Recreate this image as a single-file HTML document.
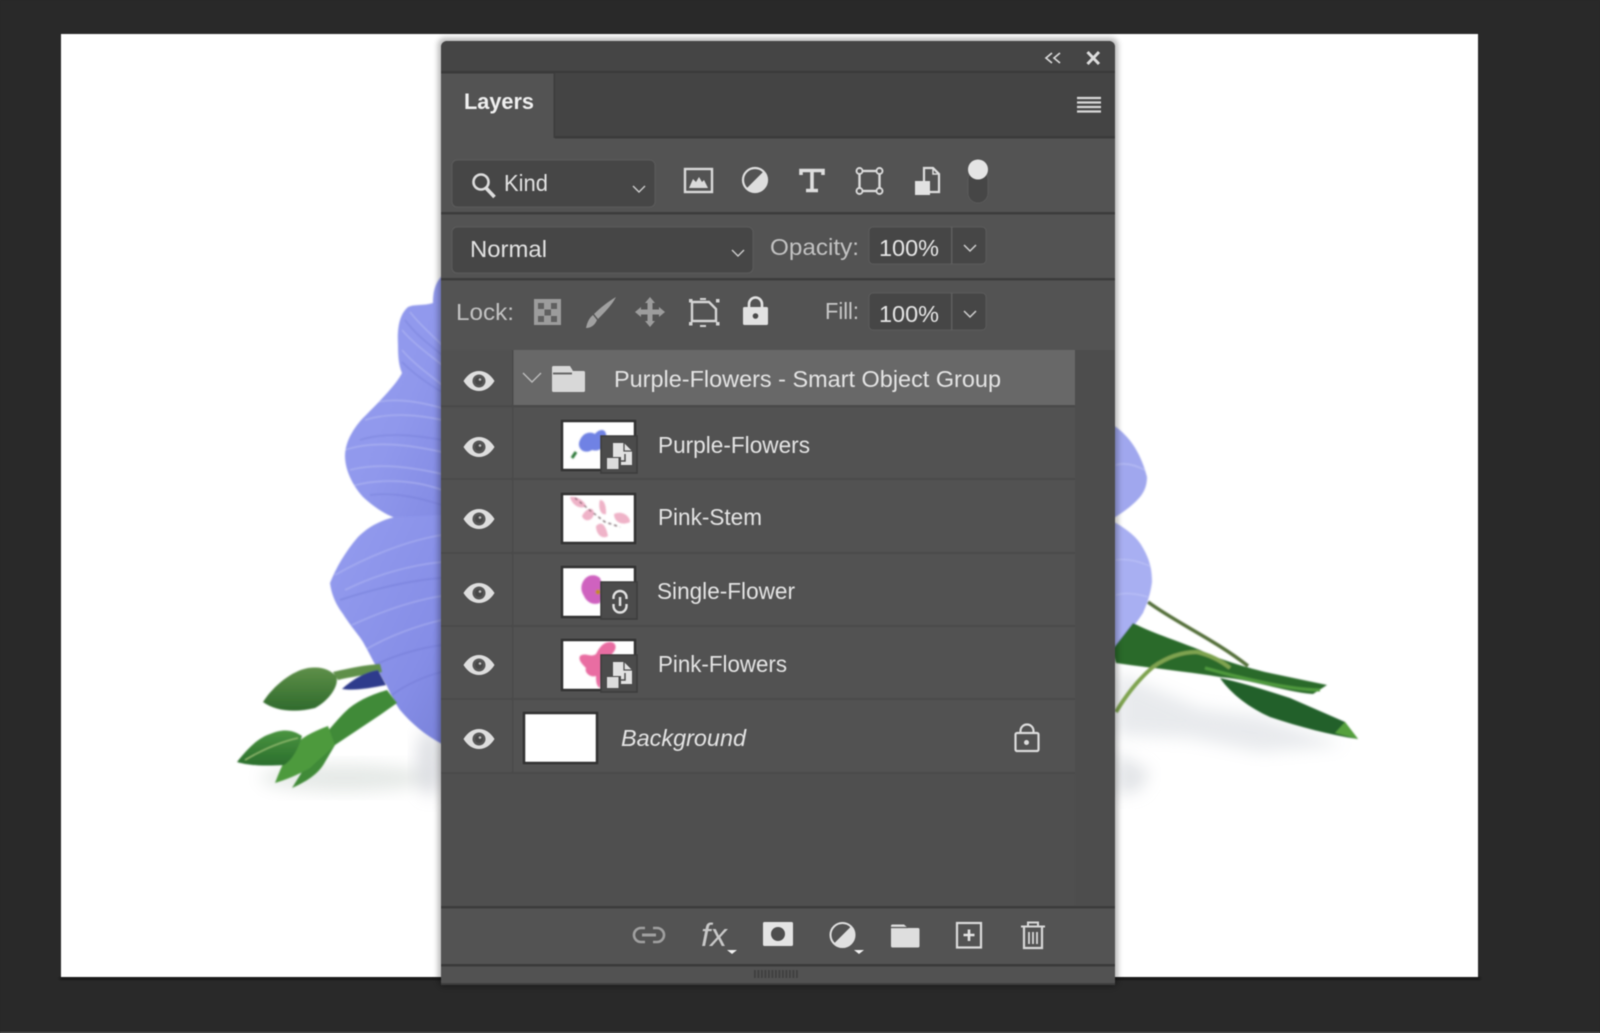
<!DOCTYPE html>
<html><head><meta charset="utf-8"><title>Layers</title>
<style>
html,body{margin:0;padding:0;background:#292929;width:1600px;height:1033px;overflow:hidden}
svg{display:block;position:absolute;left:0;top:0;filter:blur(.45px)}
text{font-family:"Liberation Sans",sans-serif;fill:#d6d6d6}
</style></head><body>
<svg width="1600" height="1033" viewBox="0 0 1600 1033" xmlns="http://www.w3.org/2000/svg">
<defs>
<linearGradient id="pa" x1="0" y1="0" x2="1" y2="1"><stop offset="0" stop-color="#939bee"/><stop offset=".55" stop-color="#9098ec"/><stop offset="1" stop-color="#8189e2"/></linearGradient>
<linearGradient id="pb" x1="0" y1="0" x2="1" y2="1"><stop offset="0" stop-color="#959def"/><stop offset=".7" stop-color="#858de6"/><stop offset="1" stop-color="#7780d8"/></linearGradient>
<linearGradient id="g1" x1="0" y1="0" x2="0" y2="1"><stop offset="0" stop-color="#5e8f48"/><stop offset="1" stop-color="#2f6a2c"/></linearGradient>
<linearGradient id="g2" x1="0" y1="0" x2="0" y2="1"><stop offset="0" stop-color="#4a9440"/><stop offset="1" stop-color="#2a6e2c"/></linearGradient>
<filter id="b8" x="-30%" y="-30%" width="160%" height="160%"><feGaussianBlur stdDeviation="8"/></filter>
<filter id="b3" x="-30%" y="-30%" width="160%" height="160%"><feGaussianBlur stdDeviation="3"/></filter>
<filter id="b1"><feGaussianBlur stdDeviation=".7"/></filter>
<filter id="s1"><feGaussianBlur stdDeviation="1"/></filter>
<clipPath id="pc1"><path d="M442 276C436 282 433 290 433 303C424 306 414 304 408 307C400 314 397 326 398 345C398 358 399 366 402 373C397 383 385 396 363 418C351 431 345 444 345 456C345 468 351 484 363 497C375 508 385 514 395 518L445 530V276Z"/></clipPath>
<clipPath id="pc2"><path d="M395 517C378 521 367 528 358 537C345 552 336 568 330 583C332 598 338 607 343 614C352 628 358 634 363 642C372 658 380 675 387 686C392 698 396 704 400 710C412 724 425 735 442 744V515Z"/></clipPath>
<g id="eye"><path d="M-15.500 0C-11-7-6-10 0-10C6-10 11-7 15.500 0C11 7 6 10 0 10C-6 10-11 7-15.500 0Z" fill="#dedede"/><circle r="6.500" fill="#565656"/><circle cx="0" cy="0" r="4" fill="#484848"/><circle cx="1" cy="-1.500" r="1.300" fill="#bdbdbd"/></g>
<g id="sm"><rect x="0" y="0" width="36" height="37" fill="#4b4b4b" stroke="#3d3d3d" stroke-width="1.500"/><path d="M12 7H23L31 15V29H20V21H12Z" fill="#e2e2e2"/><path d="M23 7V15H31" fill="none" stroke="#4b4b4b" stroke-width="1.300"/><path d="M24 18V25H20" fill="none" stroke="#4b4b4b" stroke-width="1.500"/><rect x="6" y="22" width="11.500" height="11" fill="#dcdcdc"/></g>
</defs>

<rect width="1600" height="1033" fill="#292929"/>
<rect x="0" y="1032" width="1600" height="1" fill="#606060"/>
<rect x="60" y="977" width="1420" height="3" fill="#161616" filter="url(#s1)"/>
<rect x="61" y="34" width="1417" height="943" fill="#fff"/>

<!-- left shadows -->
<ellipse cx="345" cy="778" rx="85" ry="14" fill="#b8c2bc" opacity=".35" filter="url(#b8)"/>
<ellipse cx="430" cy="762" rx="14" ry="34" fill="#c6c9d0" opacity=".55" filter="url(#b8)"/>
<!-- left petals -->
<g filter="url(#b1)">
<g clip-path="url(#pc1)"><rect x="340" y="270" width="110" height="255" fill="url(#pa)"/>
<g stroke="#c3c8f6" stroke-width="1.200" fill="none" opacity=".55">
<path d="M345 450C375 440 410 445 442 452"/><path d="M350 470C380 462 415 468 442 474"/><path d="M352 486C380 478 415 480 442 490"/><path d="M365 420C390 412 420 415 442 420"/><path d="M378 402C398 398 420 402 442 408"/><path d="M402 330C415 345 430 355 442 365"/><path d="M402 350C415 365 430 375 442 385"/><path d="M410 312C420 325 432 335 442 345"/></g>
<g stroke="#6c74d0" stroke-width="1.400" fill="none" opacity=".4">
<path d="M360 440C385 432 415 435 442 440"/><path d="M405 320C416 335 430 345 442 355"/><path d="M402 362C415 375 430 385 442 392"/><path d="M370 495C395 492 420 498 442 505"/></g></g>
<g clip-path="url(#pc2)"><rect x="325" y="510" width="125" height="240" fill="url(#pb)"/>
<g stroke="#bcc2f5" stroke-width="1.300" fill="none" opacity=".55">
<path d="M345 590C375 575 410 565 442 562"/><path d="M335 575C370 555 410 540 442 535"/><path d="M352 625C385 610 415 600 442 596"/><path d="M365 650C390 635 420 625 442 620"/></g>
<g stroke="#6c74d0" stroke-width="1.500" fill="none" opacity=".45">
<path d="M375 665C395 655 420 648 442 645"/><path d="M392 695C405 685 425 676 442 672"/><path d="M340 600C370 590 410 580 442 578"/></g></g>
</g>
<!-- left buds -->
<g filter="url(#b1)">
<path d="M333 672C350 668 365 665 380 664L382 672C365 675 350 677 338 680Z" fill="#5f8f4a"/>
<path d="M263 702C274 685 292 671 308 668C322 666 330 670 336 676C340 684 330 700 315 708C295 713 275 711 263 702Z" fill="url(#g1)"/>
<path d="M342 689C352 680 365 672 378 670L386 685C370 688 355 691 342 689Z" fill="#2f3a8c"/>
<path d="M397 703L387 690C370 695 355 702 345 712C335 722 325 735 318 742C310 760 300 775 292 788C305 782 318 775 325 762L335 745C350 735 365 725 380 715Z" fill="#3f8a38"/>
<path d="M275 783C280 770 285 758 292 748C300 738 312 732 328 726L335 745C325 755 318 760 310 768C298 775 285 780 275 783Z" fill="#4d9a3e"/>
<path d="M237 762C248 748 258 738 270 734C282 729 292 729 302 736C298 750 292 760 284 765C268 766 250 766 237 762Z" fill="url(#g2)"/>
<path d="M245 760C262 750 280 742 298 738" stroke="#9fc97a" stroke-width="1.100" fill="none"/>
</g>

<!-- right shadows -->
<path d="M1116 672L1200 708 1260 716 1345 745 1260 752 1190 738 1116 735Z" fill="#cdd2d8" opacity=".45" filter="url(#b8)"/>
<path d="M1116 752L1150 772 1140 790 1116 796Z" fill="#c6cad0" opacity=".5" filter="url(#b8)"/>
<!-- right petals -->
<g filter="url(#b1)">
<path d="M1112 425L1116 427C1128 436 1140 450 1147 477C1147 486 1144 492 1140 497C1133 505 1124 512 1112 519Z" fill="#a0a7ee"/>
<path d="M1112 522L1116 523C1128 530 1138 538 1143 548C1150 560 1152 570 1152 582C1150 597 1146 606 1143 613C1135 625 1125 638 1112 652Z" fill="#a8aff2"/>
<g stroke="#c7ccf8" stroke-width="1.200" fill="none" opacity=".6"><path d="M1116 465C1125 462 1135 465 1145 470"/><path d="M1116 560C1128 558 1140 562 1150 566"/><path d="M1116 595C1126 592 1138 594 1148 597"/></g>
<path d="M1148 602C1175 622 1215 640 1248 666" stroke="#55703a" stroke-width="3.500" fill="none"/>
<path d="M1112 650L1133 623C1150 632 1175 640 1200 650C1225 662 1250 668 1265 672L1327 685 1313 694C1285 692 1255 680 1220 677C1190 672 1150 668 1116 663Z" fill="#2a6a2c"/>
<path d="M1220 678C1240 682 1265 690 1290 698L1345 722 1358 739C1330 735 1300 727 1270 717C1250 708 1232 695 1220 678Z" fill="#23602a"/>
<path d="M1345 722L1358 739 1335 733Z" fill="#55a03e"/>
<path d="M1205 668C1240 678 1290 690 1320 690" stroke="#4f9a3e" stroke-width="3" fill="none"/>
<path d="M1116 712C1128 692 1140 678 1153 667C1170 655 1185 652 1197 652C1210 655 1220 660 1230 668" stroke="#7ea34f" stroke-width="4" fill="none"/>
</g>

<!-- panel -->
<rect x="438" y="38" width="680" height="949" rx="7" fill="#000" opacity=".28" filter="url(#b3)"/>
<path d="M441 47a6 6 0 0 1 6-6H1109a6 6 0 0 1 6 6V985H441Z" fill="#535353"/>
<!-- title -->
<path d="M441 47a6 6 0 0 1 6-6H1109a6 6 0 0 1 6 6V71H441Z" fill="#454545"/>
<rect x="441" y="71" width="674" height="2.500" fill="#3a3a3a"/>
<rect x="555" y="73" width="560" height="64" fill="#444"/>
<rect x="555" y="136" width="560" height="2.500" fill="#3b3b3b"/>
<rect x="553.500" y="73" width="1.500" height="65" fill="#3d3d3d"/>
<path d="M1052 53L1046 58 1052 63M1060 53L1054 58 1060 63" fill="none" stroke="#d8d8d8" stroke-width="1.700"/>
<path d="M1087.500 52L1099 64M1099 52L1087.500 64" stroke="#dcdcdc" stroke-width="3"/>
<path d="M1077 98H1101M1077 102.500H1101M1077 107H1101M1077 111.500H1101" stroke="#d8d8d8" stroke-width="2.200"/>
<text x="464" y="109" font-size="22" font-weight="700" textLength="70" lengthAdjust="spacingAndGlyphs" style="fill:#f0f0f0">Layers</text>

<!-- filter row -->
<rect x="441" y="212" width="674" height="2.500" fill="#3c3c3c"/>
<rect x="452" y="160" width="203" height="47" rx="5" fill="#464646" stroke="#5c5c5c" stroke-width="1"/>
<circle cx="481" cy="182" r="7.500" fill="none" stroke="#dcdcdc" stroke-width="2.600"/>
<path d="M486 188L494.500 197" stroke="#dcdcdc" stroke-width="3.600"/>
<text x="504" y="191" font-size="23" textLength="44" lengthAdjust="spacingAndGlyphs" style="fill:#e2e2e2">Kind</text>
<path d="M633 186L639 192 645 186" fill="none" stroke="#cdcdcd" stroke-width="1.400"/>
<!-- image icon -->
<rect x="685" y="169" width="27" height="23" fill="none" stroke="#dadada" stroke-width="2.400"/>
<path d="M689 188L693 179 696 182 699 177 702 182 704 180 708 188Z" fill="#dadada"/>
<!-- adj -->
<circle cx="755" cy="180" r="12" fill="#535353" stroke="#dedede" stroke-width="2.200"/>
<path d="M763.500 171.500A12 12 0 0 1 746.500 188.500Z" fill="#dedede"/>
<!-- T -->
<path d="M801 175V170.500H823V175M812 170.500V190.500M806 190.500H818" fill="none" stroke="#dedede" stroke-width="3.600"/>
<!-- transform -->
<rect x="859.500" y="171" width="20" height="20" fill="none" stroke="#dadada" stroke-width="2.400"/>
<g fill="#535353" stroke="#dadada" stroke-width="1.900"><circle cx="859.500" cy="171" r="3"/><circle cx="879.500" cy="171" r="3"/><circle cx="859.500" cy="191" r="3"/><circle cx="879.500" cy="191" r="3"/></g>
<!-- smart -->
<path d="M924 181V168H933L939 174V192H929" fill="none" stroke="#dedede" stroke-width="2.200"/>
<path d="M933 168V174H939" fill="none" stroke="#dedede" stroke-width="1.500"/>
<rect x="915" y="181" width="15" height="14" fill="#e2e2e2"/>
<!-- toggle -->
<rect x="968" y="170" width="20" height="33" rx="10" fill="#464646" stroke="#5a5a5a"/>
<circle cx="978" cy="169.500" r="10" fill="#e4e4e4"/>

<!-- blend row -->
<rect x="441" y="278" width="674" height="2.500" fill="#3c3c3c"/>
<rect x="452" y="227" width="301" height="46" rx="5" fill="#464646" stroke="#5c5c5c"/>
<text x="470" y="257" font-size="23" textLength="77" lengthAdjust="spacingAndGlyphs" style="fill:#e2e2e2">Normal</text>
<path d="M732 250L738 256 744 250" fill="none" stroke="#cdcdcd" stroke-width="1.400"/>
<text x="770" y="255" font-size="23" textLength="89" lengthAdjust="spacingAndGlyphs" style="fill:#c2c2c2">Opacity:</text>
<rect x="869" y="227" width="117" height="37" rx="4" fill="#464646" stroke="#5c5c5c"/>
<rect x="951" y="227" width="1.500" height="37" fill="#5e5e5e"/>
<text x="879" y="256" font-size="23" textLength="60" lengthAdjust="spacingAndGlyphs" style="fill:#e6e6e6">100%</text>
<path d="M964 245L970 251 976 245" fill="none" stroke="#cfcfcf" stroke-width="1.500"/>

<!-- lock row -->
<text x="456" y="320" font-size="23" textLength="58" lengthAdjust="spacingAndGlyphs" style="fill:#c2c2c2">Lock:</text>
<rect x="534" y="299" width="27" height="26" fill="#9c9c9c"/>
<g fill="#606060"><rect x="538" y="303" width="6" height="6"/><rect x="551" y="303" width="6" height="6"/><rect x="544.500" y="309.500" width="6.500" height="6"/><rect x="538" y="316" width="6" height="6"/><rect x="551" y="316" width="6" height="6"/></g>
<path d="M616 297C612 305 604 313 598 319L594 314C600 308 609 301 616 297Z" fill="#a0a0a0"/>
<path d="M593 315L597 320C595 325 591 328 586 328C587 323 589 318 593 315Z" fill="#a0a0a0"/>
<path d="M650 297L655 303H652.500V309.500H659V307L665 312 659 317V314.500H652.500V321H655L650 327 645 321H647.500V314.500H641V317L635 312 641 307V309.500H647.500V303H645Z" fill="#9c9c9c"/>
<path d="M692 302H709L716 309V321H692Z" fill="none" stroke="#d4d4d4" stroke-width="2.400"/>
<g fill="#d4d4d4"><rect x="689" y="299" width="3.500" height="3.500"/><rect x="716" y="299" width="3.500" height="3.500"/><rect x="689" y="322" width="3.500" height="3.500"/><rect x="716" y="322" width="3.500" height="3.500"/><rect x="700" y="298" width="6" height="2"/><rect x="700" y="325" width="6" height="2"/></g>
<path d="M749 308V304a6.500 6.500 0 0 1 13 0V308" fill="none" stroke="#e2e2e2" stroke-width="2.600"/>
<rect x="743" y="307" width="25" height="18" rx="1.500" fill="#e2e2e2"/><circle cx="755.500" cy="316" r="2.800" fill="#4a4a4a"/>
<text x="825" y="319" font-size="23" textLength="34" lengthAdjust="spacingAndGlyphs" style="fill:#c8c8c8">Fill:</text>
<rect x="869" y="293" width="117" height="37" rx="4" fill="#464646" stroke="#5c5c5c"/>
<rect x="951" y="293" width="1.500" height="37" fill="#5e5e5e"/>
<text x="879" y="322" font-size="23" textLength="60" lengthAdjust="spacingAndGlyphs" style="fill:#e6e6e6">100%</text>
<path d="M964 311L970 317 976 311" fill="none" stroke="#cfcfcf" stroke-width="1.500"/>

<!-- layers area -->
<rect x="441" y="350" width="674" height="556" fill="#4f4f4f"/>
<rect x="1075" y="350" width="40" height="556" fill="#4d4d4d"/>
<rect x="441" y="350" width="72" height="423" fill="#515151"/>
<rect x="513" y="350" width="562" height="55" fill="#686868"/>
<rect x="513" y="405" width="562" height="368" fill="#525252"/>
<g fill="#4a4a4a"><rect x="441" y="405" width="634" height="2.500"/><rect x="441" y="478" width="634" height="2"/><rect x="441" y="552" width="634" height="2"/><rect x="441" y="625" width="634" height="2"/><rect x="441" y="698" width="634" height="2"/><rect x="441" y="772" width="634" height="2"/><rect x="512" y="350" width="1.500" height="423"/></g>
<use href="#eye" x="479" y="381"/><use href="#eye" x="479" y="447"/><use href="#eye" x="479" y="519"/><use href="#eye" x="479" y="593"/><use href="#eye" x="479" y="665"/><use href="#eye" x="479" y="739"/>

<!-- group -->
<path d="M523 373L532 382 541 373" fill="none" stroke="#bdbdbd" stroke-width="1.400"/>
<path d="M552 367.500a1.500 1.500 0 0 1 1.500-1.500H570L573 371H583.500a1.500 1.500 0 0 1 1.500 1.500V390.500a1.500 1.500 0 0 1-1.500 1.500H553.500a1.500 1.500 0 0 1-1.500-1.500Z" fill="#d8d8d8"/>
<path d="M553 373.500H572" stroke="#686868" stroke-width="2"/>
<text x="614" y="387" font-size="23" textLength="387" lengthAdjust="spacingAndGlyphs" style="fill:#e4e4e4">Purple-Flowers - Smart Object Group</text>

<!-- thumbs -->
<g stroke="#323232" stroke-width="2.500" fill="#fff">
<rect x="562" y="421" width="73" height="49"/><rect x="562" y="494" width="73" height="49"/><rect x="562" y="567" width="73" height="50"/><rect x="562" y="640" width="73" height="50"/><rect x="524" y="713" width="73" height="50"/>
</g>
<!-- purple thumb -->
<g filter="url(#b1)"><path d="M580 440C584 431 592 432 595 434C600 428 608 428 606 440C606 448 598 452 592 450C584 455 576 448 580 440Z" fill="#6f82e4"/><path d="M576 452L572 458" stroke="#2f7a3a" stroke-width="3"/></g>
<use href="#sm" x="601" y="436"/>
<!-- pink stem -->
<g filter="url(#b1)" fill="#efb3c8">
<path d="M570 497C576 496 584 500 586 506 580 510 572 505 570 497Z"/><path d="M582 516C586 508 594 506 594 514 592 522 584 522 582 516Z"/><path d="M600 500C606 500 606 510 606 514 600 516 598 506 600 500Z"/><path d="M614 514C622 510 630 516 630 522 622 526 614 522 614 514Z"/><path d="M596 526C602 520 606 526 608 536 602 540 596 534 596 526Z"/><path d="M575 498L592 512 605 522 620 527" fill="none" stroke="#4a3038" stroke-width="1" stroke-dasharray="3 3"/>
</g>
<!-- single flower -->
<g filter="url(#b1)"><path d="M584 580C588 574 596 574 600 578L604 590 600 603C592 606 586 601 584 596 580 590 581 584 584 580Z" fill="#cf62bf"/><circle cx="598" cy="592" r="2.500" fill="#c48a20"/></g>
<rect x="601" y="582" width="36" height="37" fill="#4b4b4b" stroke="#3d3d3d" stroke-width="1.500"/>
<path d="M613.500 599V597.500a6.500 6.500 0 0 1 13 0V599M613.500 604V606a6.500 6.500 0 0 0 13 0V604" fill="none" stroke="#e0e0e0" stroke-width="2.400"/>
<rect x="618.800" y="597" width="2.500" height="9" fill="#e0e0e0"/>
<!-- pink flowers -->
<g filter="url(#b1)"><path d="M580 656C586 652 590 658 596 654 600 646 604 642 610 642 616 642 618 648 612 654L602 672 600 688C596 686 596 680 596 676 590 678 584 672 586 668 582 664 578 660 580 656Z" fill="#e96da2"/></g>
<use href="#sm" x="601" y="655"/>

<text x="658" y="453" font-size="23" textLength="152" lengthAdjust="spacingAndGlyphs" style="fill:#e4e4e4">Purple-Flowers</text>
<text x="658" y="525" font-size="23" textLength="104" lengthAdjust="spacingAndGlyphs" style="fill:#e4e4e4">Pink-Stem</text>
<text x="657" y="599" font-size="23" textLength="138" lengthAdjust="spacingAndGlyphs" style="fill:#e4e4e4">Single-Flower</text>
<text x="658" y="672" font-size="23" textLength="129" lengthAdjust="spacingAndGlyphs" style="fill:#e4e4e4">Pink-Flowers</text>
<text x="621" y="746" font-size="23" font-style="italic" textLength="125" lengthAdjust="spacingAndGlyphs" style="fill:#e4e4e4">Background</text>

<!-- bg lock -->
<path d="M1020.500 733V731a6.500 6.500 0 0 1 13 0V733" fill="none" stroke="#dcdcdc" stroke-width="2.200"/>
<rect x="1015.500" y="733" width="23" height="18" rx="1.500" fill="none" stroke="#dcdcdc" stroke-width="2.200"/>
<circle cx="1026.500" cy="742.500" r="2.500" fill="#dcdcdc"/>

<!-- bottom bar -->
<rect x="441" y="906" width="674" height="2.500" fill="#3c3c3c"/>
<rect x="441" y="964" width="674" height="2.500" fill="#3a3a3a"/>
<rect x="441" y="967" width="674" height="17" fill="#525252"/>
<rect x="441" y="983" width="674" height="2" fill="#3d3d3d"/>
<g fill="#3f3f3f"><rect x="754" y="970" width="1.800" height="8"/><rect x="757.500" y="970" width="1.800" height="8"/><rect x="761" y="970" width="1.800" height="8"/><rect x="764.500" y="970" width="1.800" height="8"/><rect x="768" y="970" width="1.800" height="8"/><rect x="771.500" y="970" width="1.800" height="8"/><rect x="775" y="970" width="1.800" height="8"/><rect x="778.500" y="970" width="1.800" height="8"/><rect x="782" y="970" width="1.800" height="8"/><rect x="785.500" y="970" width="1.800" height="8"/><rect x="789" y="970" width="1.800" height="8"/><rect x="792.500" y="970" width="1.800" height="8"/><rect x="796" y="970" width="1.800" height="8"/></g>
<!-- link -->
<path d="M645 928H641a7 7 0 0 0 0 14H645M653 928H657a7 7 0 0 1 0 14H653" fill="none" stroke="#a0a0a0" stroke-width="2.600"/>
<path d="M642 935H656" stroke="#a0a0a0" stroke-width="3"/>
<text x="701" y="946" font-size="32" font-style="italic" textLength="26" lengthAdjust="spacingAndGlyphs" style="fill:#c8c8c8">fx</text>
<path d="M727 950H737L732 954Z" fill="#f0f0f0"/>
<rect x="763" y="922" width="30" height="24" rx="1.500" fill="#e4e4e4"/><circle cx="778" cy="934" r="7" fill="#4e4e4e"/>
<circle cx="842.500" cy="935" r="12" fill="#535353" stroke="#e0e0e0" stroke-width="2"/>
<path d="M851 926.500A12 12 0 0 1 834 943.500Z" fill="#e0e0e0"/>
<path d="M854 950H864L859 954Z" fill="#f0f0f0"/>
<path d="M891 926a1.500 1.500 0 0 1 1.500-1.500H904L908 928H918a1.500 1.500 0 0 1 1.500 1.500V946a1.500 1.500 0 0 1-1.500 1.500H892.500a1.500 1.500 0 0 1-1.500-1.500Z" fill="#dedede"/>
<path d="M891 927.500H908" stroke="#535353" stroke-width="1.300"/>
<rect x="957" y="923" width="24" height="24.500" fill="none" stroke="#dcdcdc" stroke-width="2.200"/>
<path d="M969 929.500V941M963.500 935H974.500" stroke="#e4e4e4" stroke-width="2.600"/>
<path d="M1021 926.500H1045M1028 926V922.500H1038V926" fill="none" stroke="#d8d8d8" stroke-width="2"/>
<path d="M1024 927V948H1042V927" fill="none" stroke="#d8d8d8" stroke-width="2.200"/>
<path d="M1029 932V944M1033 932V944M1037 932V944" stroke="#d8d8d8" stroke-width="1.800"/>
</svg>
</body></html>
